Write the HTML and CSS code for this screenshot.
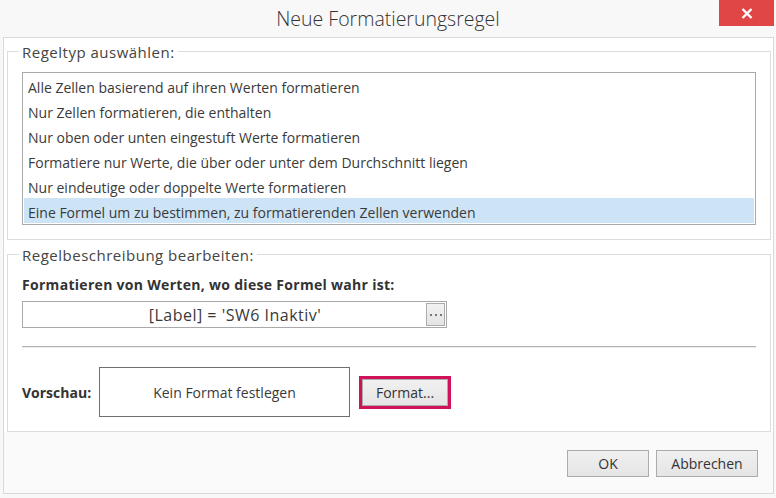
FILE: index.html
```html
<!DOCTYPE html>
<html>
<head>
    <title>Neue Formatierungsregel</title>
    <link rel="stylesheet" href="styles.css">
</head>
<body>
    <div class="titlebar">
        <h1 class="title">Neue Formatierungsregel</h1>
        <button class="close" title="Schließen">
            <svg width="12" height="11" viewBox="0 0 12 11">
                <path d="M1.5 1 L10.5 10 M10.5 1 L1.5 10" stroke="#fff" stroke-width="2.4" fill="none"/>
            </svg>
        </button>
    </div>

    <div class="dialog">
        <div class="dialog-body">
            <fieldset class="group">
                <legend>Regeltyp auswählen:</legend>
                <ul class="rule-list">
                    <li>Alle Zellen basierend auf ihren Werten formatieren</li>
                    <li>Nur Zellen formatieren, die enthalten</li>
                    <li>Nur oben oder unten eingestuft Werte formatieren</li>
                    <li>Formatiere nur Werte, die über oder unter dem Durchschnitt liegen</li>
                    <li>Nur eindeutige oder doppelte Werte formatieren</li>
                    <li class="selected">Eine Formel um zu bestimmen, zu formatierenden Zellen verwenden</li>
                </ul>
            </fieldset>

            <fieldset class="group group-desc">
                <legend>Regelbeschreibung bearbeiten:</legend>
                <div class="formula-label">Formatieren von Werten, wo diese Formel wahr ist:</div>
                <div class="formula">
                    <span class="formula-text">[Label] = 'SW6 Inaktiv'</span>
                    <button class="dots">
                        <svg width="17" height="21" viewBox="0 0 17 21">
                            <rect x="3" y="10" width="2" height="2" fill="#777"/>
                            <rect x="8" y="10" width="2" height="2" fill="#777"/>
                            <rect x="13" y="10" width="2" height="2" fill="#777"/>
                        </svg>
                    </button>
                </div>
                <hr class="sep">
                <div class="preview-row">
                    <span class="preview-label">Vorschau:</span>
                    <div class="preview-box">Kein Format festlegen</div>
                    <span class="highlight"><button class="btn btn-format">Format...</button></span>
                </div>
            </fieldset>
        </div>

        <div class="dialog-footer">
            <button class="btn btn-ok">OK</button>
            <button class="btn btn-cancel">Abbrechen</button>
        </div>
    </div>
</body>
</html>
```

FILE: styles.css
```css
body {
    margin: 0;
    width: 776px;
    height: 498px;
    overflow: hidden;
    background-color: #f8f8f8;
    font-family: "Open Sans", "Noto Sans", sans-serif;
    font-size: 14px;
    color: #3a3a3a;
}

/* Titelleiste */
.titlebar {
    display: grid;
    grid-template-columns: 1fr auto 1fr;
    height: 37px;
}
.title {
    grid-column: 2;
    margin: 0;
    font-size: 19.5px;
    font-weight: 300;
    line-height: 38px;
    color: #333;
}
.close {
    justify-self: end;
    align-self: start;
    width: 55px;
    height: 26px;
    margin-right: 2px;
    padding: 0;
    border: none;
    background-color: #e14646;
    display: flex;
    align-items: center;
    justify-content: center;
}

/* Dialograhmen */
.dialog {
    margin-left: 3px;
    width: 771px;
    height: 457px;
    box-sizing: border-box;
    border: 1px solid #d9d9d9;
    display: flex;
    flex-direction: column;
}
.dialog-body {
    background-color: #fff;
    padding: 4px 2px 0 3px;
}
.dialog-footer {
    flex: 1;
    background-color: #fafafa;
    display: flex;
    justify-content: flex-end;
    align-items: flex-start;
    gap: 7px;
    padding: 18px 15px 0 0;
}

/* Gruppen */
.group {
    margin: 0;
    padding: 0 14px 14px 14px;
    border: 1px solid #dcdcdc;
    min-width: 0;
}
.group legend {
    margin-left: -3px;
    padding: 0 3px;
    height: 18px;
    line-height: 20px;
    font-size: 15px;
    letter-spacing: 0.5px;
    color: #444;
}
.group-desc {
    margin-top: 5px;
}

.rule-list {
    margin: 12px 0 0;
    padding: 0 1px 1px 1px;
    list-style: none;
    border: 1px solid #a9a9a9;
}
.rule-list li {
    height: 23px;
    padding: 2px 0 0 4px;
    line-height: 25px;
    white-space: nowrap;
}
.rule-list li.selected {
    background-color: #cde4f6;
}

.formula-label {
    margin-top: 13px;
    height: 18px;
    line-height: 18px;
    font-weight: bold;
    letter-spacing: 0.3px;
    color: #333;
}
.formula {
    margin-top: 7px;
    width: 425px;
    height: 27px;
    box-sizing: border-box;
    padding: 1px;
    border: 1px solid #a9a9a9;
    display: flex;
}
.formula-text {
    flex: 1;
    padding-left: 20px;
    text-align: center;
    font-size: 16px;
    letter-spacing: 0.5px;
    line-height: 25px;
}
.dots {
    width: 19px;
    height: 23px;
    padding: 0;
    border: 1px solid #acacac;
    background: linear-gradient(#f2f2f2, #e4e4e4);
    display: flex;
}

.sep {
    margin: 18px 0 0;
    border: 0;
    border-top: 1px solid #b4b4b4;
    border-bottom: 1px solid #ececec;
}

.preview-row {
    margin-top: 19px;
    display: flex;
    align-items: center;
}
.preview-label {
    width: 77px;
    font-weight: bold;
    color: #333;
}
.preview-box {
    width: 251px;
    height: 50px;
    box-sizing: border-box;
    border: 1px solid #707070;
    display: flex;
    align-items: center;
    justify-content: center;
}
.highlight {
    margin-left: 9px;
    border: 3px solid #cf1259; /* Markierung um den Button */
    display: flex;
}

/* Buttons */
.btn {
    height: 27px;
    padding: 0;
    font: inherit;
    color: #333;
    border: 1px solid #acacac;
    background: linear-gradient(#f0f0f0, #e5e5e5);
}
.btn-format {
    width: 86px;
}
.btn-ok {
    width: 82px;
}
.btn-cancel {
    width: 102px;
}
```
